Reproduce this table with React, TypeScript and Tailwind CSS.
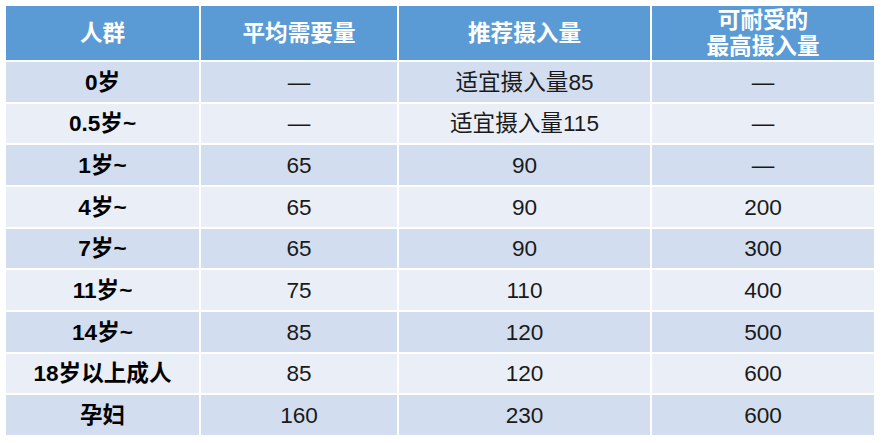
const header = ['人群', '平均需要量', '推荐摄入量', '可耐受的\n最高摄入量'];

const rows = [
  ['0岁', '—', '适宜摄入量85', '—'],
  ['0.5岁~', '—', '适宜摄入量115', '—'],
  ['1岁~', '65', '90', '—'],
  ['4岁~', '65', '90', '200'],
  ['7岁~', '65', '90', '300'],
  ['11岁~', '75', '110', '400'],
  ['14岁~', '85', '120', '500'],
  ['18岁以上成人', '85', '120', '600'],
  ['孕妇', '160', '230', '600'],
];

const cols = 'grid grid-cols-[193px_196px_251px_222px] gap-x-[2px]';

export default function App() {
  return (
    <div
      className="h-[443px] w-[888px] bg-white pl-[6px] pt-[6px] text-[22.6px] leading-[26px] text-black"
      style={{ fontFamily: "'Liberation Sans', 'Noto Sans CJK SC', sans-serif" }}
    >
      <div className={`${cols} mb-[4px] h-[52px]`}>
        {header.map((h) => (
          <div
            key={h}
            className="flex items-center justify-center whitespace-pre-line bg-[#5b9bd5] pt-[2px] text-center font-bold text-white"
          >
            {h}
          </div>
        ))}
      </div>
      <div className={`${cols} h-[373px] grid-rows-[repeat(9,1fr)] gap-y-[2px]`}>
        {rows.map((r, i) =>
          r.map((c, j) => (
            <div
              key={`${i}-${j}`}
              className={`flex items-center justify-center pt-[2px] ${
                i % 2 === 0 ? 'bg-[#d2deef]' : 'bg-[#eaeff7]'
              } ${j === 0 ? 'font-bold' : 'text-[#1a1a1a]'}`}
            >
              {c}
            </div>
          )),
        )}
      </div>
    </div>
  );
}
